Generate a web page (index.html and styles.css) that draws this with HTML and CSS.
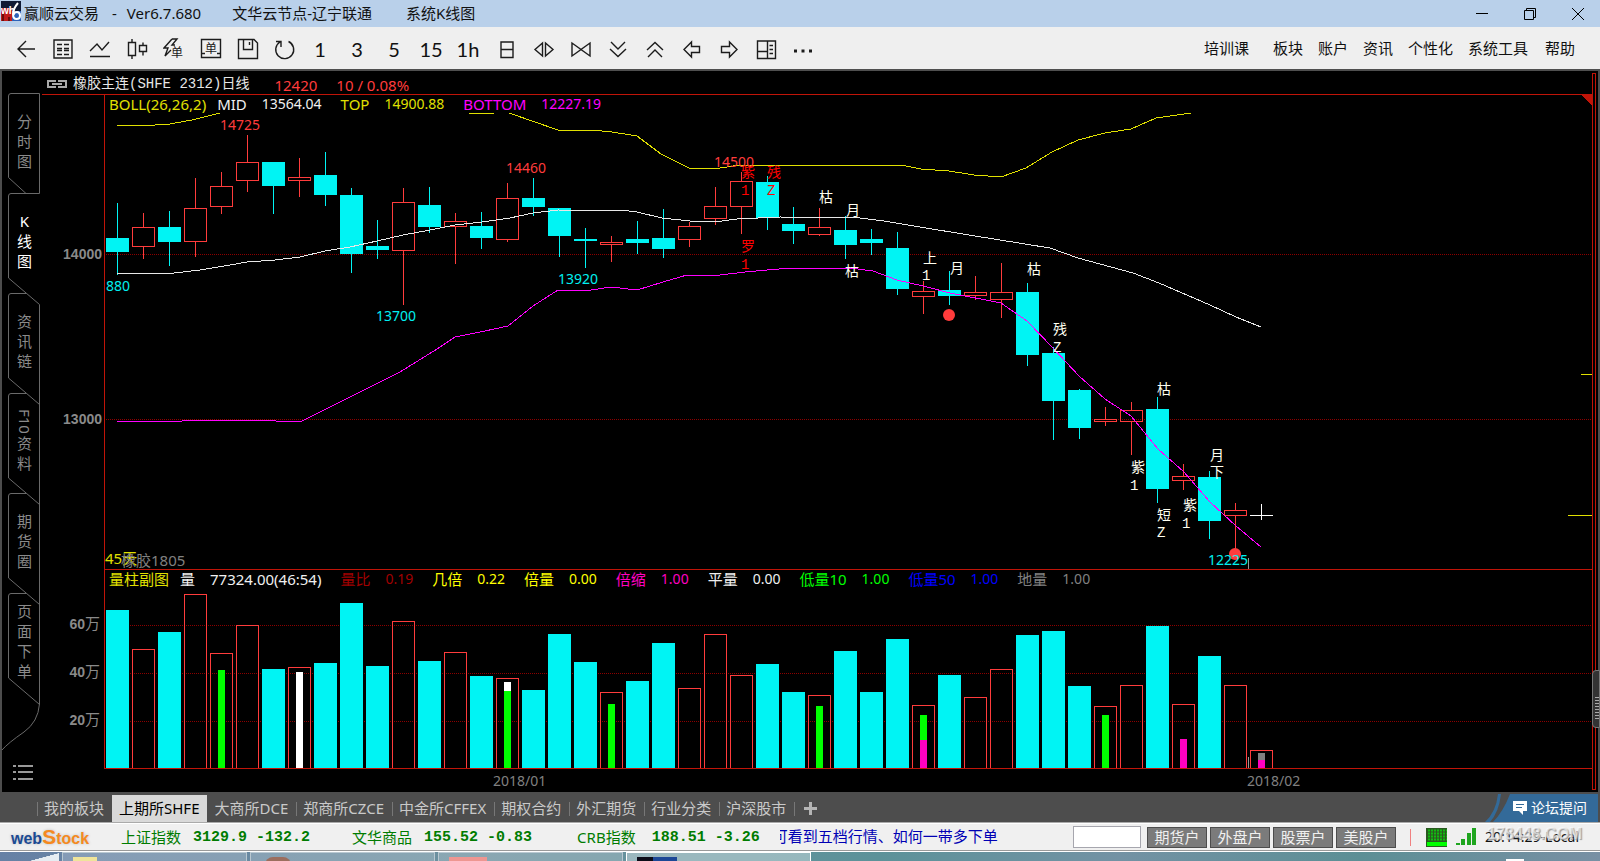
FILE: index.html
```html
<!DOCTYPE html>
<html lang="zh-CN">
<head>
<meta charset="utf-8">
<title>赢顺云交易 - Ver6.7.680</title>
<link rel="stylesheet" href="styles.css">
</head>
<body>
<div class="app">
  <header class="titlebar">
    <svg class="app-icon" width="20" height="20" viewBox="0 0 20 20">
      <rect width="20" height="20" fill="#101a34"/>
      <rect x="0" y="7" width="11" height="13" fill="#c01c1c"/>
      <rect x="11" y="10" width="9" height="10" fill="#2d62b8"/>
      <path d="M2 20V13M8 20V16" stroke="#6b0d0d" stroke-width="2"/>
      <text x="0" y="13" class="icon-wh">wh</text>
      <path d="M17 2Q12 8 12 13Q12 18 15.500 18Q19 18 19 14.500Q19 11 16 11Q13 11 12.500 14" fill="none" stroke="#fff" stroke-width="2"/>
    </svg>
    <span class="title-text">赢顺云交易</span>
    <span class="title-text title-dash">-</span>
    <span class="title-text title-ver">Ver6.7.680</span>
    <span class="title-text title-node">文华云节点-辽宁联通</span>
    <span class="title-text">系统K线图</span>
    <div class="window-controls">
      <button class="win-btn" aria-label="最小化"><svg width="14" height="14" viewBox="0 0 14 14"><path d="M1 6.500H13"/></svg></button>
      <button class="win-btn" aria-label="还原"><svg width="14" height="14" viewBox="0 0 14 14"><path d="M1.500 3.500H10.500V12.500H1.500ZM3.500 3.500V1.500H12.500V10.500H10.500"/></svg></button>
      <button class="win-btn" aria-label="关闭"><svg width="14" height="14" viewBox="0 0 14 14"><path d="M1 1L13 13M13 1L1 13"/></svg></button>
    </div>
  </header>

  <nav class="toolbar">
    <div class="tools">
      <button class="tool" aria-label="返回"><svg viewBox="0 0 22 22"><path d="M3 11H20M11 3L3 11L11 19"/></svg></button>
      <button class="tool" aria-label="报价"><svg viewBox="0 0 22 22"><path d="M2 2H20V20H2ZM5 6.500H10M12 6.500H17M5 10.500H10M12 10.500H17M5 12.500H10M12 12.500H17M5 16.500H10M12 16.500H17"/></svg></button>
      <button class="tool" aria-label="分时"><svg viewBox="0 0 22 22"><path d="M1 13L8 6L13 12L20 4M1 18.500H21"/></svg></button>
      <button class="tool" aria-label="K线"><svg viewBox="0 0 22 22"><path d="M2.500 4.500H9.500V17.500H2.500ZM6 1V4.500M6 17.500V21M13.500 7.500H20.500V13.500H13.500ZM17 4.500V7.500M17 13.500V17.500"/></svg></button>
      <button class="tool" aria-label="闪电下单"><svg viewBox="0 0 22 22"><path d="M9 1L1 10H5L2 18L8 12M9 1H14L9 7H12"/><text x="8" y="19" class="glyph-dan">单</text></svg></button>
      <button class="tool" aria-label="下单"><svg viewBox="0 0 22 22"><path d="M1.500 1.500H20.500V19.500H1.500ZM1.500 15.500H5M17 15.500H20.500"/><text x="5" y="15" class="glyph-dan">单</text></svg></button>
      <button class="tool" aria-label="保存"><svg viewBox="0 0 22 22"><path d="M1.500 1.500H17L20.500 5V20.500H1.500ZM6.500 1.500V11.500H15.500V1.500M12.500 4V7"/></svg></button>
      <button class="tool" aria-label="刷新"><svg viewBox="0 0 22 22"><path d="M14.500 3.500A9 9 0 1 1 6 4M2 3.500H7V9"/></svg></button>
      <button class="tool tool-text">1</button>
      <button class="tool tool-text">3</button>
      <button class="tool tool-text">5</button>
      <button class="tool tool-text">15</button>
      <button class="tool tool-text">1h</button>
      <button class="tool" aria-label="日"><svg viewBox="0 0 22 22"><path d="M5 4H17V19.500H5ZM5 11.500H17"/></svg></button>
      <button class="tool" aria-label="展开"><svg viewBox="0 0 22 22"><path d="M9.500 5V18L2 11.500ZM12.500 5V18L20 11.500Z"/></svg></button>
      <button class="tool" aria-label="收缩"><svg viewBox="0 0 22 22"><path d="M2 5V18L11 11.500ZM20 5V18L11 11.500Z"/></svg></button>
      <button class="tool" aria-label="向下"><svg viewBox="0 0 22 22"><path d="M4 4L11 11L18 4M3 11L11 18.500L19 11"/></svg></button>
      <button class="tool" aria-label="向上"><svg viewBox="0 0 22 22"><path d="M3 12L11 4.500L19 12M4 19L11 12L18 19"/></svg></button>
      <button class="tool" aria-label="左移"><svg viewBox="0 0 22 22"><path d="M3 11.500L10.500 4V8.500H18.500V14.500H10.500V19Z"/></svg></button>
      <button class="tool" aria-label="右移"><svg viewBox="0 0 22 22"><path d="M19 11.500L11.500 4V8.500H3.500V14.500H11.500V19Z"/></svg></button>
      <button class="tool" aria-label="布局"><svg viewBox="0 0 22 22"><path d="M2.500 3H20.500V20.500H2.500ZM12.500 3V20.500M2.500 13.500H12.500M14.500 7.500H18M14.500 11.500H18M14.500 15.500H18"/></svg></button>
      <button class="tool" aria-label="更多"><svg viewBox="0 0 22 22"><path class="dots" d="M2 13H5M9.500 13H12.500M17 13H20"/></svg></button>
    </div>
    <div class="menu">
      <a class="menu-item menu-first" href="#">培训课</a>
      <a class="menu-item" href="#">板块</a>
      <a class="menu-item" href="#">账户</a>
      <a class="menu-item" href="#">资讯</a>
      <a class="menu-item" href="#">个性化</a>
      <a class="menu-item menu-tools" href="#">系统工具</a>
      <a class="menu-item" href="#">帮助</a>
    </div>
  </nav>

  <main class="workspace">
    <aside class="sidebar">
      <svg class="sidebar-frame" width="40" height="721" viewBox="2 71 40 721">
        <g fill="none" stroke="#6a6a6a">
          <path d="M39.500 193.500V93.500H11Q8.500 93.500 8.500 96V177.500L26 193.500"/>
          <path d="M39.500 193.500H11Q8.500 193.500 8.500 196V278L39.500 304.500V704"/>
          <path d="M26 293.500H11Q8.500 293.500 8.500 296V378L39.500 404.500"/>
          <path d="M26 393.500H11Q8.500 393.500 8.500 396V478L39.500 504.500"/>
          <path d="M26 493.500H11Q8.500 493.500 8.500 496V578L39.500 604.500"/>
          <path d="M26 593.500H11Q8.500 593.500 8.500 596V678L39.500 704.500"/>
          <path d="M39.500 704Q38 722 24 732Q8 743 2 750"/>
          <path d="M13 766H16M18 766H33M13 772H16M18 772H33M13 779H16M18 779H33" stroke="#999" stroke-width="2"/>
        </g>
      </svg>
      <button class="side-tab"><span>分</span><span>时</span><span>图</span></button>
      <button class="side-tab side-active"><span>K</span><span>线</span><span>图</span></button>
      <button class="side-tab"><span>资</span><span>讯</span><span>链</span></button>
      <button class="side-tab"><span class="side-rot">F10</span><span>资</span><span>料</span></button>
      <button class="side-tab"><span>期</span><span>货</span><span>圈</span></button>
      <button class="side-tab"><span>页</span><span>面</span><span>下</span><span>单</span></button>
    </aside>

    <section class="charts">
      <div class="chart-head">
        <svg class="link-icon" width="22" height="10" viewBox="0 0 22 10"><path d="M9 7V8H2V2H9V3M13 3V2H20V8H13V7M6 5H16" fill="none" stroke="#a9a9a9" stroke-width="2"/></svg>
        <h1 class="contract">橡胶主连(SHFE 2312)日线</h1>
        <span class="quote">12420</span>
        <span class="quote">10 / 0.08%</span>
      </div>
      <div class="pane">
        <div class="legend">
          <span class="pair pair-first yellow">BOLL(26,26,2)</span>
          <span class="pair white"><span>MID</span><span class="value">13564.04</span></span>
          <span class="pair yellow"><span>TOP</span><span class="value">14900.88</span></span>
          <span class="pair magenta"><span>BOTTOM</span><span class="value">12227.19</span></span>
        </div>
        <svg class="plot" viewBox="42 94 1550 475" id="price">
          <g class="frame"><path d="M42 94.500H1592M104.500 94V569"/><path class="corner" d="M1580 94H1592V106Z"/></g>
          <g class="grid"><path d="M106 254.500H1592M106 419.500H1592"/></g>
          <g class="axis-label" text-anchor="end"><text x="102" y="259">14000</text><text x="102" y="424">13000</text></g>
          <g id="candles"></g>
          <g class="curves">
            <polyline stroke="#e8e8e8" points="117,273 174,273 200,270 230,265 247,262 275,260 300,257 325,251 350,247 377,241 403,235 430,230 455,225 482,222 510,218 533,213 558,210 600,211 620,210 637,212 662,218 690,221 714,222 737,219 780,217 860,218 884,221 920,227 975,236 1050,248 1078,258 1133,273 1159,283 1210,305 1236,317 1261,327"/>
            <polyline stroke="#f0f" points="117,421 182,421 184,420 260,420 276,421 300,422 400,372 437,349 455,337 485,331 508,326 533,306 558,290 585,291 611,287 637,290 663,282 687,275 720,275 745,272 790,268 850,268 873,271 897,280 923,286 950,293 1001,303 1027,321 1053,348 1079,376 1105,399 1131,416 1158,449 1184,472 1210,502 1236,526 1261,547"/>
            <g stroke="#e0e000">
              <polyline points="117,125 155,125 170,124 192,120 220,113"/>
              <polyline points="469,113 494,113"/>
              <polyline points="509,113 558,130 591,130 612,132 637,136 661,154 689,168 720,168 740,165 901,165 921,169 949,171 974,175 1001,177 1026,168 1052,152 1078,140 1105,133 1131,129 1156,118 1191,113"/>
              <path d="M1581 374.500H1592M1568 515.500H1592"/>
            </g>
            <path stroke="#fff" d="M1250 515.500H1273M1261.500 504V520"/>
            <path stroke="#999" d="M1248.500 558V569"/>
          </g>
          <g fill="#ff3c3c"><circle cx="949" cy="315" r="6"/><circle cx="1235" cy="554" r="6"/></g>
          <g class="tag tag-up"><text x="220" y="130">14725</text><text x="506" y="173">14460</text><text x="714" y="167">14500</text></g>
          <g class="tag tag-down"><text x="106" y="291">880</text><text x="376" y="321">13700</text><text x="558" y="284">13920</text><text x="1208" y="565">12225</text></g>
          <g class="mark" id="marks"></g>
          <text class="days" x="105" y="564">45天</text>
          <text class="sub-name" x="121" y="566">橡胶1805</text>
        </svg>
      </div>
      <div class="pane">
        <div class="legend">
          <span class="pair pair-first yellow">量柱副图</span>
          <span class="pair white"><span>量</span><span>77324.00(46:54)</span></span>
          <span class="pair darkred"><span>量比</span><span class="value">0.19</span></span>
          <span class="pair pure-yellow"><span>几倍</span><span class="value">0.22</span></span>
          <span class="pair pure-yellow"><span>倍量</span><span class="value">0.00</span></span>
          <span class="pair pink"><span>倍缩</span><span class="value">1.00</span></span>
          <span class="pair white"><span>平量</span><span class="value">0.00</span></span>
          <span class="pair green"><span>低量10</span><span class="value">1.00</span></span>
          <span class="pair blue"><span>低量50</span><span class="value">1.00</span></span>
          <span class="pair gray"><span>地量</span><span class="value">1.00</span></span>
        </div>
        <svg class="plot" viewBox="42 569 1550 223" id="volume">
          <g class="grid"><path d="M106 625.500H1592M106 673.500H1592M106 721.500H1592"/></g>
          <g id="bars"></g>
          <g class="frame"><path d="M104 569.500H1592M104.500 569V769M104 768.500H1592"/></g>
          <path d="M1248.500 757V768" stroke="#999" shape-rendering="crispEdges"/>
          <g class="axis-label" text-anchor="end"><text x="100" y="629">60<tspan class="wan">万</tspan></text><text x="100" y="677">40<tspan class="wan">万</tspan></text><text x="100" y="725">20<tspan class="wan">万</tspan></text></g>
          <g class="date"><text x="493" y="786">2018/01</text><text x="1247" y="786">2018/02</text></g>
        </svg>
      </div>
    </section>

    <div class="scroll-strip"><span class="scroll-thumb"></span></div>
  </main>

  <nav class="tabbar">
    <button class="tab">我的板块</button>
    <button class="tab tab-active">上期所SHFE</button>
    <button class="tab">大商所DCE</button>
    <button class="tab">郑商所CZCE</button>
    <button class="tab">中金所CFFEX</button>
    <button class="tab">期权合约</button>
    <button class="tab">外汇期货</button>
    <button class="tab">行业分类</button>
    <button class="tab">沪深股市</button>
    <button class="tab tab-add" aria-label="添加"><svg width="13" height="13" viewBox="0 0 13 13"><path d="M6.500 0V13M0 6.500H13" stroke="#b5b5b5" stroke-width="3"/></svg></button>
    <a class="forum" href="#">
      <svg class="forum-edge" width="28" height="28" viewBox="0 0 28 28"><path d="M0 28Q11 18 13 0H16Q14 18 5 28ZM8 28Q18 18 25 0H28V28Z" fill="#336a99"/></svg>
      <span class="forum-body">
        <svg width="14" height="14" viewBox="0 0 14 14"><path d="M0 0H14V10H10V14L6 10H0Z" fill="#fff"/><path d="M3 3.500H11M3 6.500H9" stroke="#336a99"/></svg>
        论坛提问
      </span>
    </a>
  </nav>

  <footer class="status">
    <div class="logo"><span class="logo-web">web</span><span class="logo-s">S</span><span class="logo-tock">tock</span></div>
    <div class="index index-sh"><span class="index-name">上证指数</span><b>3129.9</b><b>-132.2</b></div>
    <div class="index index-wh"><span class="index-name">文华商品</span><b>155.52</b><b>-0.83</b></div>
    <div class="index"><span class="index-name index-crb">CRB指数</span><b>188.51</b><b>-3.26</b></div>
    <div class="ticker"><span>可看到五档行情、如何一带多下单</span></div>
    <div class="accounts">
      <input class="code-input" type="text" aria-label="代码">
      <button class="account">期货户</button>
      <button class="account">外盘户</button>
      <button class="account">股票户</button>
      <button class="account">美股户</button>
      <svg class="lights" width="70" height="22" viewBox="0 0 70 22">
        <path d="M4.500 3V20" stroke="#f08080"/>
        <rect x="20" y="2" width="21" height="19" fill="#2a5a20"/>
        <path d="M22 4.500H41M22 7.500H41M22 10.500H41M22 13.500H41" stroke="#10c010" stroke-width="2" stroke-dasharray="2 1"/>
        <rect x="21" y="16" width="20" height="4" fill="#0f0"/>
        <path d="M52 17V19M57 13V19M63 7V19M68 2V19" stroke="#1fa51f" stroke-width="4"/>
      </svg>
      <div class="clock">20:14:29-Local<span class="watermark">178448.COM</span></div>
    </div>
  </footer>

  <div class="taskbar">
    <span class="task-start"></span>
    <span class="task"><i class="chip chip-folder"></i></span>
    <span class="task"><i class="chip chip-person"></i></span>
    <span class="task"><i class="chip chip-pink"></i></span>
    <span class="task task-on"><i class="chip chip-app"></i></span>
    <span class="task-tray"></span>
  </div>
</div>
<script src="chart.js"></script>
</body>
</html>
```
FILE: styles.css
```css
* { box-sizing: border-box; }

body {
  margin: 0;
  background: #4d4d4d;
  font-family: "Noto Sans", "Noto Sans CJK SC", sans-serif;
  font-size: 15px;
  line-height: 20px;
}

button {
  margin: 0;
  padding: 0;
  border: 0;
  background: none;
  color: inherit;
  font: inherit;
}

a { color: inherit; text-decoration: none; }
svg { display: block; }

.app { display: flex; flex-direction: column; min-height: 100vh; overflow: hidden; }

/* title bar */
.titlebar {
  display: flex;
  align-items: center;
  height: 27px;
  padding-left: 1px;
  background: #b9d0ea;
  color: #111;
}
.app-icon { align-self: flex-start; margin: 1px 3px 0 0; }
.icon-wh { fill: #fff; font: bold 10px "Liberation Sans", sans-serif; }
.title-text { padding-bottom: 2px; white-space: nowrap; }
.title-dash { margin-left: 13px; }
.title-ver { margin-left: 10px; }
.title-node { margin: 0 34px 0 31px; }
.window-controls { display: flex; margin-left: auto; }
.win-btn { display: grid; place-items: center; width: 48px; height: 27px; }
.win-btn:last-child { margin-right: -2px; }
.win-btn svg { fill: none; stroke: #000; }

/* toolbar */
.toolbar {
  display: flex;
  justify-content: space-between;
  height: 44px;
  padding: 0 25px 0 7px;
  border-bottom: 2px solid #4f4f4f;
  background: #efefef;
  color: #111;
}
.tools { display: flex; padding-top: 1px; }
.tool { display: grid; place-items: center; width: 37px; height: 41px; }
.tool svg { width: 22px; height: 22px; fill: none; stroke: #1c1c1c; stroke-width: 1.4; }
.tool .dots { stroke-width: 3; }
.tool .glyph-dan { fill: #1c1c1c; stroke: none; font: 12px "Noto Sans CJK SC", sans-serif; }
.tool-text { padding-right: 3px; font: 20px Lato, sans-serif; }
.menu { display: flex; align-items: center; gap: 15px; white-space: nowrap; }
.menu-first { margin-right: 9px; }
.menu-tools { margin-right: 2px; }

/* workspace */
.workspace {
  display: flex;
  align-items: stretch;
  padding: 0 2px;
  background: linear-gradient(#000, #000) content-box #4d4d4d;
}
.sidebar {
  position: relative;
  flex: 0 0 40px;
  padding-top: 20px;
  color: #8a8a8a;
}
.sidebar-frame { position: absolute; top: 0; left: 0; }
.side-tab {
  position: relative;
  display: flex;
  flex-direction: column;
  align-items: center;
  justify-content: center;
  width: 40px;
  height: 100px;
  padding-left: 5px;
  line-height: 20px;
}
.side-active { color: #fff; }
.side-rot { writing-mode: vertical-rl; }

.charts { flex: 1 1 auto; min-width: 0; }
.chart-head {
  display: flex;
  align-items: center;
  height: 23px;
  padding: 2px 0 0 4px;
  color: #ff3c3c;
  white-space: nowrap;
}
.contract {
  margin: 0 25px 0 5px;
  color: #e6e6e6;
  font: 14px/20px "Liberation Mono", "Noto Sans CJK SC", monospace;
}
.quote { margin-right: 19px; padding-top: 3px; }

.pane { position: relative; }
.plot { width: 100%; height: auto; }
.legend {
  position: absolute;
  top: 0;
  left: 67px;
  display: flex;
  gap: 19px;
  line-height: 20px;
  white-space: nowrap;
}
.pair { display: flex; gap: 15px; }
.pair-first { margin-right: -8px; }
.value { font-size: 14px; }
.yellow { color: #e0e000; }
.pure-yellow { color: #ff0; }
.white { color: #f0f0f0; }
.magenta { color: #f0f; }
.pink { color: #ff00c0; }
.darkred { color: #a00000; }
.green { color: #0f0; }
.blue { color: #00f; }
.gray { color: #808080; }

.frame path { fill: none; stroke: #c01408; shape-rendering: crispEdges; }
.frame .corner { fill: #c01408; stroke: none; }
.grid path { stroke: #8c0000; stroke-dasharray: 1 1; shape-rendering: crispEdges; }
.axis-label { fill: #8a8a8a; font: bold 14px "Liberation Sans", "Noto Sans CJK SC", sans-serif; }
.wan { font-weight: 400; font-size: 15px; }
.curves { fill: none; stroke-width: 1; shape-rendering: crispEdges; }
.tag { font-size: 14px; }
.tag-up { fill: #ff3c3c; }
.tag-down { fill: #00f0f0; }
.mark { fill: #fffff0; font: 14px "Liberation Mono", "Noto Sans CJK SC", monospace; }
.mark .alert { fill: #f00; }
.days { fill: #e0e000; font-size: 15px; }
.sub-name { fill: #808080; font-size: 15px; }
.date { fill: #808080; font-size: 14px; }
.fall { fill: #00f4f4; stroke: none; shape-rendering: crispEdges; }
.rise { fill: none; stroke: #ff3c3c; shape-rendering: crispEdges; }
.wick-fall { stroke: #00f4f4; shape-rendering: crispEdges; }
.wick-rise { stroke: #ff3c3c; shape-rendering: crispEdges; }

.scroll-strip {
  position: relative;
  flex: 0 0 4px;
  margin: 2px 2px 2px 0;
  border: 1px solid #c01408;
}
.scroll-thumb {
  position: absolute;
  top: 83%;
  right: -5px;
  width: 8px;
  height: 58px;
  margin-top: 3px;
  border: 1px solid #777;
  border-radius: 4px 0 0 4px;
  background: repeating-linear-gradient(#aaa 0 1px, #333 1px 3px) 2px 26px / 4px 24px no-repeat #333;
}

/* market tabs */
.tabbar {
  display: flex;
  align-items: flex-end;
  gap: 1px;
  height: 30px;
  padding: 0 2px 0 37px;
  background: #4d4d4d;
  color: #c9c9c9;
  white-space: nowrap;
}
.tab { position: relative; height: 27px; padding: 0 7px 2px; }
.tab:not(.tab-active)::before {
  content: "";
  position: absolute;
  top: 7px;
  left: 0;
  width: 1px;
  height: 14px;
  background: #777;
}
.tab-active { background: #d9d9d9; color: #000; }
.tab-active + .tab::before { display: none; }
.tab-add { display: grid; place-items: center; padding: 0 10px; }
.forum { display: flex; margin-left: auto; color: #fff; font-size: 14px; }
.forum-body {
  display: flex;
  align-items: center;
  gap: 4px;
  height: 28px;
  padding-right: 11px;
  background: #336a99;
}

/* status bar */
.status {
  display: flex;
  align-items: center;
  height: 30px;
  padding: 0 19px 0 11px;
  border-top: 1px solid #aaa;
  border-bottom: 1px solid #fff;
  background: #f0f0f0;
  box-shadow: inset 0 1px #fff, inset 0 -1px #999;
  white-space: nowrap;
}
.logo {
  display: flex;
  align-items: baseline;
  width: 110px;
  font: bold 16px "Liberation Sans", sans-serif;
  text-shadow: 0 0 3px #bbb;
}
.logo-web { color: #1a4a94; }
.logo-s { color: #f58a1f; font-size: 21px; line-height: 22px; }
.logo-tock { color: #f58a1f; }
.index { display: flex; align-items: center; gap: 9px; color: #007c00; }
.index b { padding-top: 2px; font: bold 15px/20px "Liberation Mono", monospace; }
.index-name { font-size: 15px; }
.index:first-of-type { gap: 9px; }
.index-crb { margin-right: 7px; }
.index-sh { margin-right: 42px; }
.index-wh { margin-right: 45px; }
.index-sh .index-name, .index-wh .index-name { margin-right: 3px; }
.ticker {
  display: flex;
  justify-content: flex-end;
  width: 218px;
  margin-left: 20px;
  padding-bottom: 2px;
  overflow: hidden;
  color: #0000b4;
}
.accounts { display: flex; align-items: center; gap: 3px; margin-left: auto; }
.code-input { width: 68px; height: 22px; margin-right: 3px; border: 1px solid #a6a6ae; background: #fff; }
.account {
  width: 60px;
  height: 21px;
  border: 1px solid #4d4d4d;
  background: #7b7b7b;
  color: #f0f0f0;
  line-height: 17px;
}
.lights { margin: 0 6px 0 7px; }
.clock { position: relative; width: 96px; color: #111; font-size: 14px; }
.watermark {
  position: absolute;
  top: -3px;
  left: 2px;
  color: rgba(255, 255, 255, 0.6);
  font: bold 16px/20px "Liberation Sans", sans-serif;
  text-shadow: 1px 1px 1px #999;
}

/* desktop task bar */
.taskbar {
  display: flex;
  gap: 3px;
  height: 10px;
  overflow: hidden;
  background: linear-gradient(90deg, #6681a5, #6d929f 30%, #5c9299 55%, #7392a4 70%, #5c8f95 85%, #7890a4);
}
.task-start { width: 59px; background: linear-gradient(165deg, transparent 65%, #e6edf2 66%); }
.task { width: 185px; padding: 4px 10px 0; border: 1px solid #b9c8d1; border-bottom: 0; background: rgba(255, 255, 255, 0.2); }
.task-on { background: rgba(255, 255, 255, 0.35); border-color: #fff; }
.chip { display: block; height: 8px; }
.chip-folder { width: 24px; background: #efe49a; }
.chip-person { width: 26px; margin-left: 4px; border-radius: 13px 13px 0 0; background: #9c6e5e; }
.chip-pink { width: 38px; background: #ee9691; }
.chip-app { width: 40px; background: linear-gradient(90deg, #0c0c18 40%, #1c4796 41%); }
.task-tray { width: 18px; margin: 7px 76px 0 auto; background: #fff; }
```
FILE: chart.js
```javascript
// Each row: kind (f = fall, r = rise), body top, body bottom, high, low, volume top, overlay bars [colour, top]
const rows = [
  ["f", 238, 252, 203, 275, 610], ["r", 227, 247, 213, 259, 649], ["f", 227, 242, 211, 266, 632],
  ["r", 208, 242, 178, 257, 594], ["r", 186, 207, 172, 214, 653, ["#0f0", 670]], ["r", 162, 181, 135, 192, 625],
  ["f", 162, 186, 162, 214, 669], ["r", 177, 181, 158, 197, 667, ["#fff", 672]], ["f", 175, 195, 152, 206, 663],
  ["f", 195, 254, 188, 273, 603], ["f", 246, 250, 220, 259, 666], ["r", 202, 251, 188, 305, 621],
  ["f", 205, 227, 187, 233, 661], ["r", 221, 227, 213, 264, 652], ["f", 226, 238, 212, 249, 676],
  ["r", 198, 240, 183, 242, 678, ["#fff", 682], ["#0f0", 691]], ["f", 198, 207, 178, 216, 690],
  ["f", 208, 236, 208, 257, 634], ["f", 239, 241, 228, 268, 662], ["r", 242, 245, 236, 262, 692, ["#0f0", 704]],
  ["f", 239, 243, 221, 254, 681], ["f", 238, 249, 209, 258, 643], ["r", 226, 240, 222, 247, 688],
  ["r", 206, 219, 187, 225, 634], ["r", 181, 207, 172, 234, 675], ["f", 182, 218, 176, 230, 664],
  ["f", 224, 231, 207, 244, 692], ["r", 227, 235, 208, 236, 695, ["#0f0", 706]], ["f", 230, 245, 216, 259, 651],
  ["f", 239, 243, 229, 255, 692], ["f", 248, 289, 232, 295, 639],
  ["r", 291, 297, 281, 314, 705, ["#0f0", 715], ["#ff00c0", 740]], ["f", 290, 296, 271, 305, 675],
  ["r", 292, 296, 276, 300, 697], ["r", 292, 300, 263, 318, 669], ["f", 292, 355, 283, 366, 635],
  ["f", 353, 401, 347, 440, 631], ["f", 390, 428, 389, 439, 686], ["r", 419, 422, 407, 426, 706, ["#0f0", 715]],
  ["r", 410, 422, 402, 455, 685], ["f", 409, 489, 397, 503, 626], ["r", 476, 481, 464, 490, 704, ["#ff00c0", 739]],
  ["f", 477, 521, 471, 539, 656], ["r", 510, 516, 503, 550, 685],
  ["n", 0, 0, 0, 0, 750, ["#808080", 753], ["#ff00c0", 760]]
];

const STEP = 26, LEFT = 106, WIDTH = 23, BASE = 768;

function body(kind, x, top, bottom) {
  return kind === "f"
    ? `<rect class="fall" x="${x}" y="${top}" width="${WIDTH}" height="${bottom - top}"/>`
    : `<rect class="rise" x="${x + 0.5}" y="${top + 0.5}" width="${WIDTH - 1}" height="${bottom - top - 1}"/>`;
}

let candles = "", bars = "";
rows.forEach(([kind, top, bottom, high, low, vol, ...overlays], i) => {
  const x = LEFT + STEP * i, cx = x + 11.5;
  if (kind !== "n") {
    const cls = kind === "f" ? "wick-fall" : "wick-rise";
    candles += `<path class="${cls}" d="M${cx} ${high}V${top}M${cx} ${bottom}V${low}"/>` + body(kind, x, top, bottom);
  }
  bars += body(kind, x, vol, kind === "f" ? BASE : BASE + 1);
  overlays.forEach(([colour, y]) => {
    bars += `<rect x="${x + 8}" y="${y}" width="7" height="${BASE - y}" fill="${colour}"/>`;
  });
});
document.getElementById("candles").innerHTML = candles;
document.getElementById("bars").innerHTML = bars;

// Signal letters: text, x, baseline, alert flag
const marks = [
  ["紫", 741, 177, 1], ["1", 741, 195, 1], ["残", 767, 177, 1], ["Z", 767, 195, 1],
  ["罗", 741, 251, 1], ["1", 741, 269, 1], ["枯", 819, 202], ["月", 846, 215], ["枯", 845, 276],
  ["上", 923, 263], ["1", 922, 280], ["月", 950, 273], ["枯", 1027, 274], ["残", 1053, 334], ["Z", 1053, 352],
  ["枯", 1157, 394], ["紫", 1131, 472], ["1", 1130, 490], ["短", 1157, 520], ["Z", 1157, 537],
  ["紫", 1183, 510], ["1", 1182, 528], ["月", 1210, 460], ["下", 1210, 477]
];
document.getElementById("marks").innerHTML = marks
  .map(([t, x, y, alert]) => `<text x="${x}" y="${y}"${alert ? ' class="alert"' : ""}>${t}</text>`)
  .join("");
```
